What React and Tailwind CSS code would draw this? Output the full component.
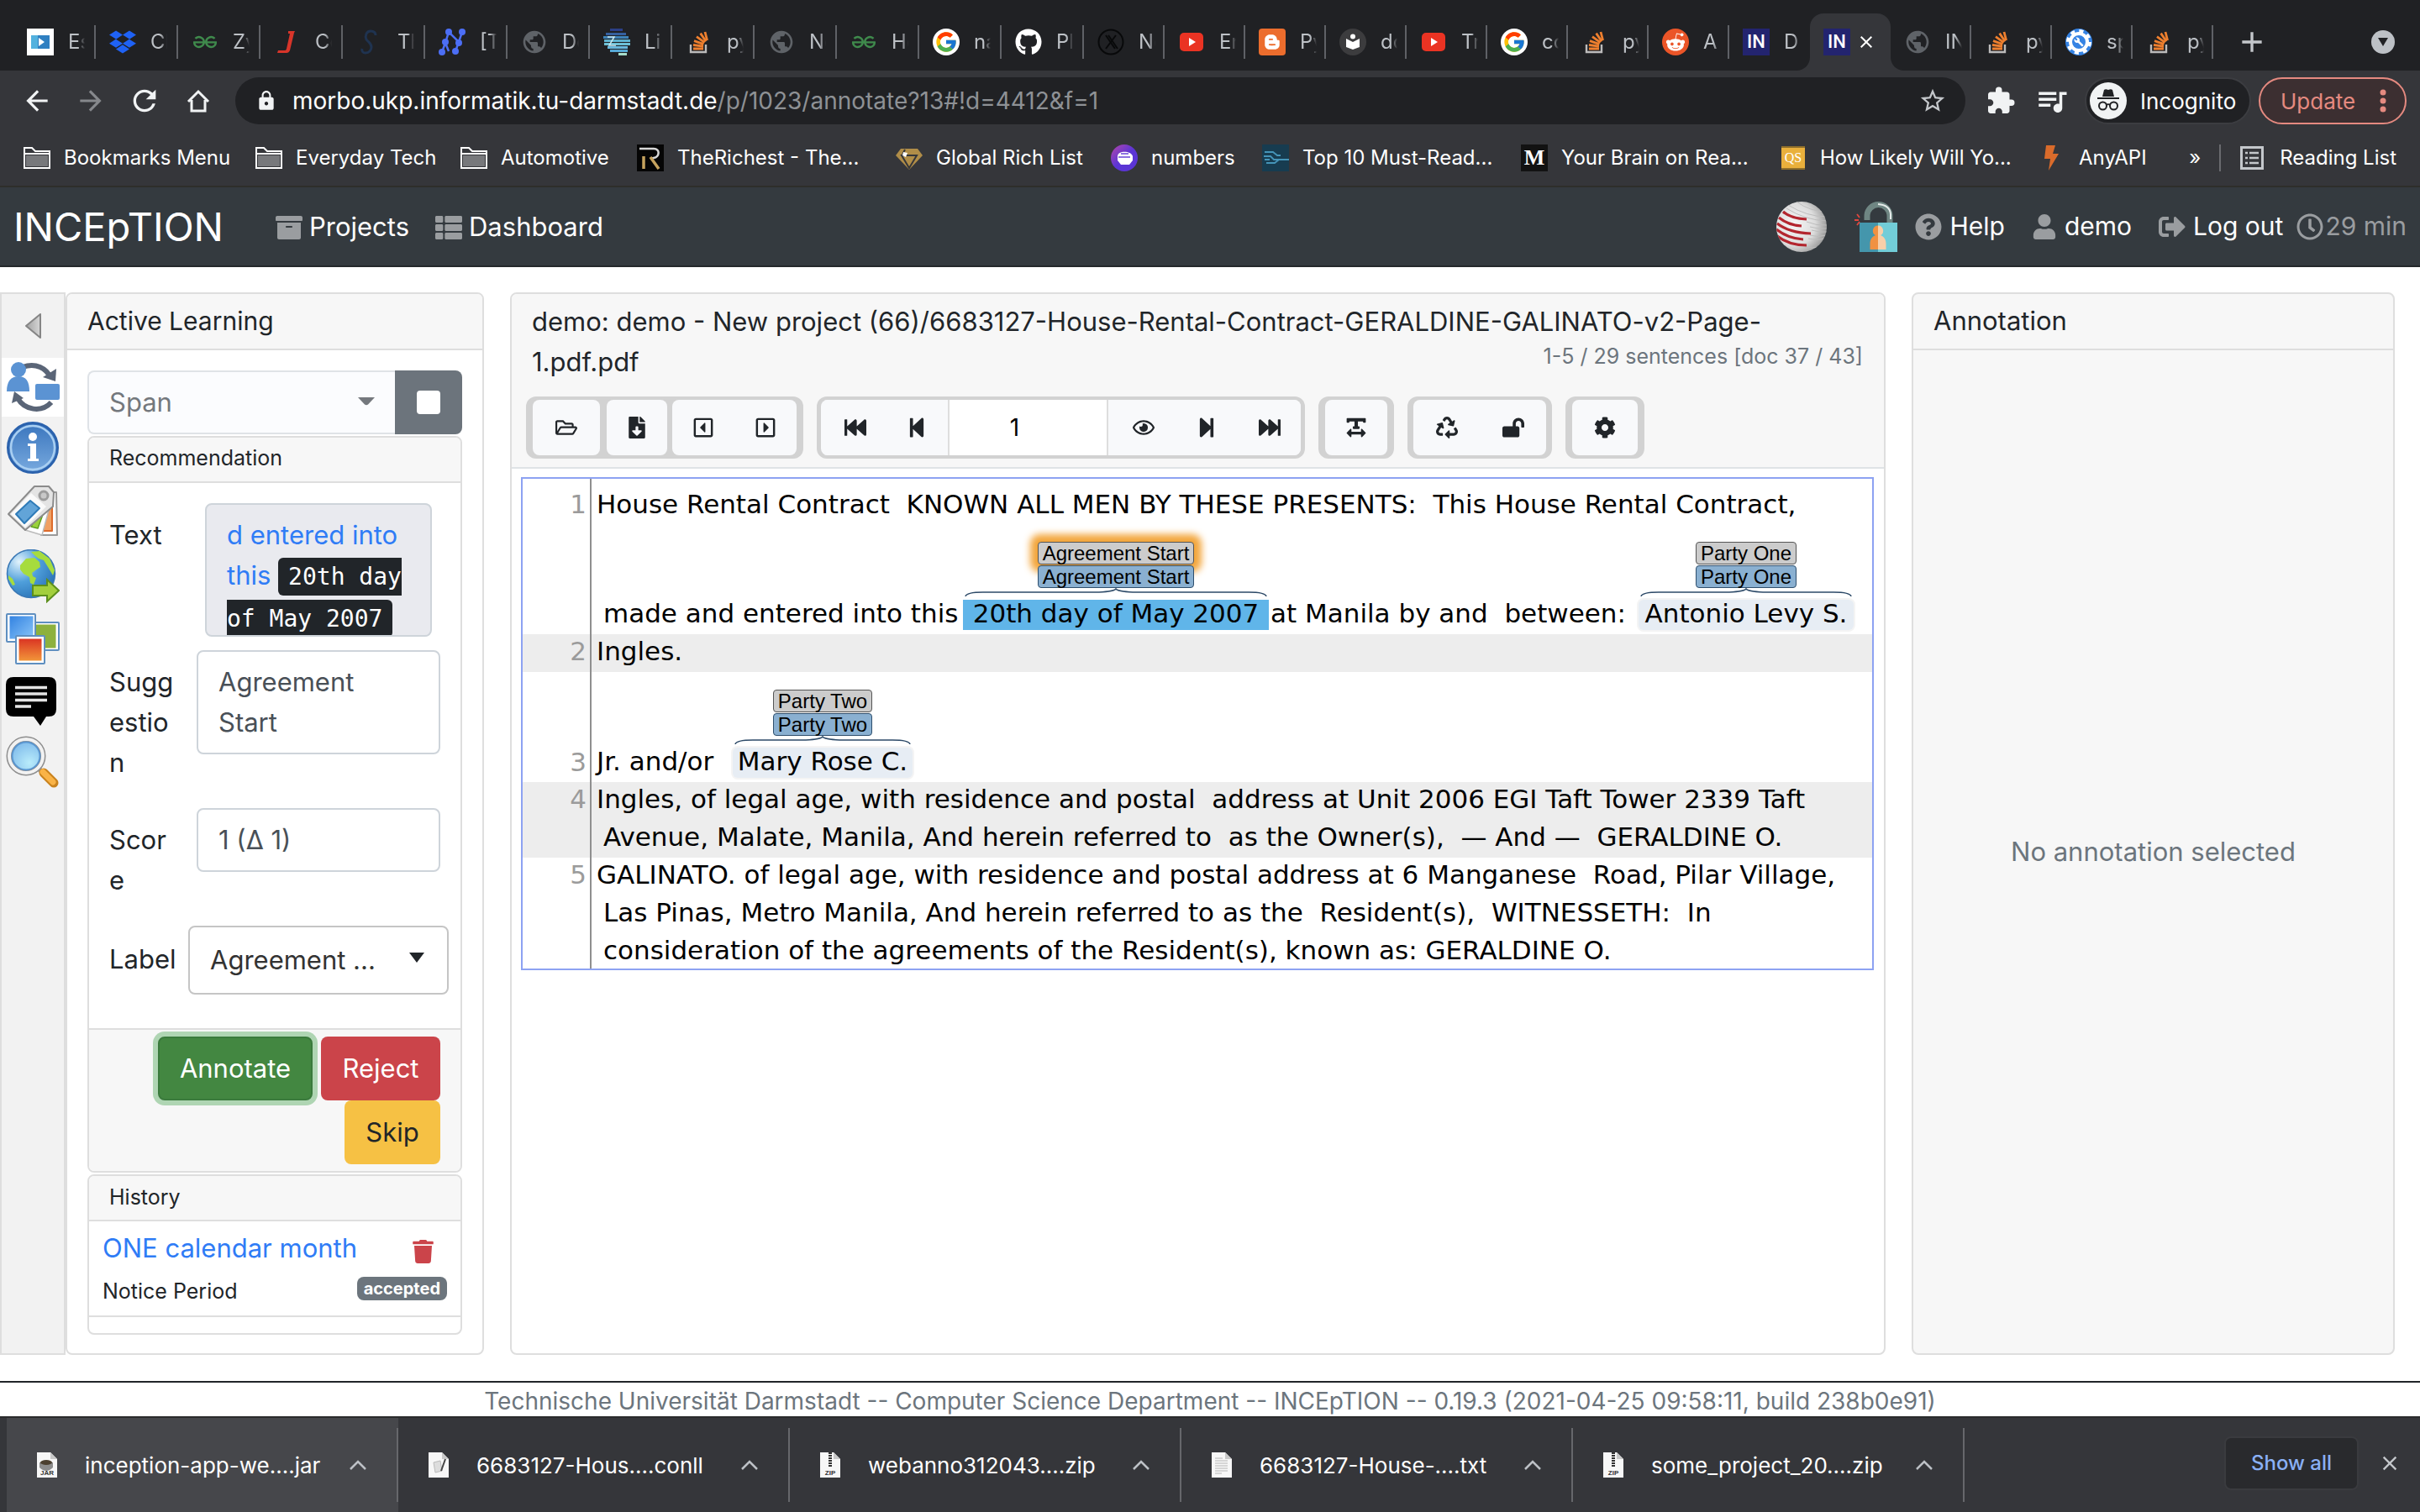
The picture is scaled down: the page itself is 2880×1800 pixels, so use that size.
import React from 'react';
import {
  FaArchive, FaThList, FaQuestionCircle, FaUser, FaSignOutAlt, FaRegClock, FaRegFolderOpen,
  FaFileDownload, FaRegCaretSquareLeft, FaRegCaretSquareRight, FaFastBackward, FaStepBackward,
  FaRegEye, FaStepForward, FaFastForward, FaTextWidth, FaRecycle, FaLockOpen, FaCog, FaTrash,
  FaDropbox, FaGithub, FaRedditAlien, FaBloggerB,
} from 'react-icons/fa';
import { SiGeeksforgeeks } from 'react-icons/si';
import { FcGoogle } from 'react-icons/fc';
import {
  MdArrowBack, MdArrowForward, MdRefresh, MdLock, MdStarBorder, MdExtension, MdQueueMusic,
  MdPublic, MdAdd, MdClose, MdBuild,
} from 'react-icons/md';

/* ---------- favicons ---------- */

const StackIcon = () => (
  <svg viewBox="0 0 32 32" className="size-8">
    <path d="M6 19v9h18v-9" fill="none" stroke="#bcbbbb" strokeWidth="2.4" />
    <g stroke="#ee7f2e" strokeWidth="2.8">
      <path d="M9 24h12M9 19.5l12 1.6M10 14.6l11.4 4M13 9.6l9.6 7M17.6 5.6l6.6 9.6M23 4l2.6 10" />
    </g>
  </svg>
);
const YoutubeIcon = () => (
  <svg viewBox="0 0 32 32" className="size-8">
    <rect x="2" y="5" width="28" height="22" rx="5" fill="#ea3323" />
    <path d="M13 11v10l8-5z" fill="#fff" />
  </svg>
);
const PlayerIcon = () => (
  <svg viewBox="0 0 32 32" className="size-8">
    <rect width="32" height="32" fill="#fff" />
    <rect x="5" y="8" width="22" height="16" fill="#2f7fc1" />
    <rect x="5" y="8" width="8" height="16" fill="#53b1de" />
    <path d="M14 11v10l7-5z" fill="#fff" />
  </svg>
);
const NodesIcon = () => (
  <svg viewBox="0 0 32 32" className="size-8">
    <path d="M4 28L8 17L12 4L24 16L28 4M8 17L12 27M24 16L20 27" fill="none" stroke="#4c6ef5" strokeWidth="2.5" />
    <g fill="#4c6ef5">
      <circle cx="4" cy="28" r="4" /><circle cx="8" cy="16" r="4" /><circle cx="12" cy="4" r="4" />
      <circle cx="24" cy="17" r="4" /><circle cx="28" cy="4" r="4" /><circle cx="20" cy="27" r="4" />
    </g>
  </svg>
);
const StripesIcon = () => (
  <svg viewBox="0 0 32 32" className="size-8">
    <path d="M8 0h15v3H8z" fill="#2b3f86" />
    <path d="M3 5h24v3H3z" fill="#35609f" />
    <path d="M0 9h30v3H0z" fill="#3e83b8" />
    <path d="M1 13h31v3H1z" fill="#5fb3d0" />
    <path d="M1 17h31v3H1z" fill="#6dc0d6" />
    <path d="M5 21h24v3H5z" fill="#69b8dd" />
    <path d="M8 25h21v3H8z" fill="#57a9d6" />
    <path d="M18 29h10v3H18z" fill="#a5dccb" />
    <path d="M5 10h8L7 20h8" fill="none" stroke="#c9e8f0" strokeWidth="1.500" />
  </svg>
);
const JIcon = () => (
  <svg viewBox="0 0 32 32" className="size-8">
    <path d="M17 3h8l-1 2-5 21c-1 2-2 3-4 3H4l1-3h8c1 0 1.500-.5 2-2l4-18h-2z" fill="#d8352a" />
  </svg>
);
const SIcon = () => (
  <svg viewBox="0 0 32 32" className="size-8">
    <path d="M23 8c0-4-3-5-6-5-5 0-7 6-5 10 2 3 6 4 6 9 0 4-3 7-7 7-3 0-5-2-4-5" fill="none" stroke="#1f3350" strokeWidth="3" />
  </svg>
);
const CrossCircle = () => (
  <svg viewBox="0 0 32 32" className="size-8" fill="none" stroke="#08090a">
    <circle cx="16" cy="16" r="14.500" strokeWidth="2" />
    <path d="M10 8l11 16M13 8l11 16M22 8L10 24" strokeWidth="2" />
  </svg>
);
const ReaderIcon = () => (
  <svg viewBox="0 0 32 32" className="size-8">
    <circle cx="16" cy="16" r="16" fill="#3c3c3e" />
    <circle cx="16" cy="9.500" r="3" fill="#fff" />
    <path d="M8 12l8 4 8-4v10l-8 3-8-3z" fill="#fff" />
  </svg>
);
const GearIcon = () => (
  <span className="relative grid size-8 place-items-center overflow-hidden rounded-full bg-[#3583e4]">
    <svg viewBox="0 0 32 32" className="col-start-1 row-start-1 size-8">
      <circle cx="16" cy="16" r="10" fill="none" stroke="#fff" strokeWidth="4" />
      <circle cx="16" cy="16" r="13" fill="none" stroke="#fff" strokeWidth="4" strokeDasharray="5 5.200" />
    </svg>
    <MdBuild className="col-start-1 row-start-1 size-3 text-white" />
  </span>
);
const GithubIcon = () => <FaGithub className="size-8 text-white" />;
const GoogleIcon = () => (
  <span className="grid size-8 place-items-center rounded-full bg-white"><FcGoogle className="size-7" /></span>
);
const BloggerIcon = () => (
  <span className="grid size-8 place-items-center rounded-sm bg-[#ec6d2d]"><FaBloggerB className="size-5 text-white" /></span>
);
const RedditIcon = () => (
  <span className="grid size-8 place-items-center rounded-full bg-[#eb5528]"><FaRedditAlien className="size-6 text-white" /></span>
);
const GfgIcon = () => <SiGeeksforgeeks className="size-7 text-[#3f8a4c]" />;
const GlobeIcon = () => <MdPublic className="size-8 text-[#5f6368]" />;
const DropIcon = () => <FaDropbox className="size-8 text-[#1f62f5]" />;
const InIcon = () => (
  <span className="grid size-8 place-items-center bg-[#23246f] font-[Roboto,sans-serif] text-[22px] leading-none font-medium text-white">IN</span>
);

const wideTabs = [
  [PlayerIcon, 'Es'], [DropIcon, 'Cl'], [GfgIcon, 'Zy'], [JIcon, 'Co'], [SIcon, 'Th'], [NodesIcon, '[Tl'],
  [GlobeIcon, 'De'], [StripesIcon, 'Lin'], [StackIcon, 'py'], [GlobeIcon, 'Ne'], [GfgIcon, 'Ho'],
  [GoogleIcon, 'na'], [GithubIcon, 'Pl'],
];
const midTabs = [
  [CrossCircle, 'Ne'], [YoutubeIcon, 'En'], [BloggerIcon, 'Py'], [ReaderIcon, 'do'], [YoutubeIcon, 'Tr'],
  [GoogleIcon, 'co'], [StackIcon, 'py'], [RedditIcon, 'A'], [InIcon, 'D'],
];
const lastTabs = [[GlobeIcon, 'IN'], [StackIcon, 'py'], [GearIcon, 'sp'], [StackIcon, 'py']];

const Tab = ({ icon: Icon, label, width, sep = true }) => (
  <button type="button" className={`flex h-[68px] ${width} shrink-0 items-center justify-between pl-4 text-[#bdc1c6]`}>
    <span className="flex items-center gap-[17px]">
      <span className="grid size-8 place-items-center"><Icon /></span>
      <span className="w-5 overflow-hidden text-left text-[24px] whitespace-nowrap [mask-image:linear-gradient(to_right,black_60%,transparent)]">{label}</span>
    </span>
    <span className={sep ? 'h-10 w-0.5 bg-[#5f6166]' : 'h-10 w-0.5'} />
  </button>
);

const TabStrip = () => (
  <div className="flex h-[84px] items-end bg-[#202124] pl-4">
    {wideTabs.map(([icon, label], i) => <Tab key={i} icon={icon} label={label} width="w-[98px]" />)}
    {midTabs.map(([icon, label], i) => (
      <Tab key={i} icon={icon} label={label} width="w-[96px]" sep={i < midTabs.length - 1} />
    ))}
    <div className="relative flex h-[68px] w-[96px] shrink-0 items-center gap-[7px] rounded-t-2xl bg-[#35363a] pl-4">
      <svg viewBox="0 0 16 16" className="absolute bottom-0 -left-4 size-4"><path d="M16 0v16H0C9 16 16 9 16 0z" fill="#35363a" /></svg>
      <svg viewBox="0 0 16 16" className="absolute -right-4 bottom-0 size-4"><path d="M0 0v16h16C7 16 0 9 0 0z" fill="#35363a" /></svg>
      <InIcon />
      <button type="button" aria-label="Close tab"><MdClose className="size-6 text-white" /></button>
    </div>
    {lastTabs.map(([icon, label], i) => <Tab key={i} icon={icon} label={label} width="w-[96px]" />)}
    <button type="button" aria-label="New tab" className="ml-[26px] flex h-[68px] items-center">
      <MdAdd className="size-10 text-[#c4c7cb]" />
    </button>
    <div className="flex h-[68px] flex-1 items-center justify-end pr-[30px]">
      <button type="button" aria-label="Search tabs" className="grid size-7 place-items-center rounded-full bg-[#bdc1c6]">
        <svg viewBox="0 0 12 10" className="h-2.5 w-3"><path d="M0 0h12L6 10z" fill="#202124" /></svg>
      </button>
    </div>
  </div>
);

const AddressBar = () => (
  <div className="flex h-[72px] items-center bg-[#35363a] pr-4 pl-6 text-[#f1f3f4]">
    <button type="button" aria-label="Back" className="mr-6 grid size-10 place-items-center"><MdArrowBack className="size-[38px]" /></button>
    <button type="button" aria-label="Forward" className="mr-6 grid size-10 place-items-center"><MdArrowForward className="size-[38px] text-[#86888c]" /></button>
    <button type="button" aria-label="Reload" className="mr-6 grid size-10 place-items-center"><MdRefresh className="size-10" /></button>
    <button type="button" aria-label="Home" className="mr-6 grid size-10 place-items-center">
      <svg viewBox="0 0 28 28" className="size-7" fill="none" stroke="#f1f3f4" strokeWidth="3">
        <path d="M2 15L14 3l12 12M6 13v13h16V13" />
      </svg>
    </button>
    <div className="flex h-14 flex-1 items-center rounded-full bg-[#202124] pr-[22px] pl-6">
      <MdLock className="mr-[18px] size-[26px]" />
      <p className="flex-1 text-[28px] text-white">
        morbo.ukp.informatik.tu-darmstadt.de<span className="text-[#8e9195]">/p/1023/annotate?13#!d=4412&amp;f=1</span>
      </p>
      <button type="button" aria-label="Bookmark"><MdStarBorder className="size-[34px] text-[#c4c7cb]" /></button>
    </div>
    <div className="ml-[24px] flex items-center gap-[22px]">
      <MdExtension className="size-9" />
      <MdQueueMusic className="size-[42px]" />
    </div>
    <div className="ml-[18px] flex h-14 w-[198px] items-center gap-4 rounded-full border-2 border-[#3c3d41] bg-[#202124] pl-1">
      <svg viewBox="0 0 44 44" className="size-11">
        <circle cx="22" cy="22" r="22" fill="#f1f3f4" />
        <path d="M15 17l2-8c1-1 3-1 5 0 2-1 4-1 5 0l2 8z" fill="#202124" />
        <path d="M9 19h26" stroke="#202124" strokeWidth="2" />
        <g fill="none" stroke="#202124" strokeWidth="2"><circle cx="15.500" cy="28" r="4.500" /><circle cx="28.500" cy="28" r="4.500" /><path d="M20 27c1-1 3-1 4 0" /></g>
      </svg>
      <span className="text-[26px] text-white">Incognito</span>
    </div>
    <button type="button" className="ml-[9px] flex h-14 w-[176px] items-center justify-between rounded-full border-2 border-[#e58a80] bg-[#3c2f31] pr-[22px] pl-6 text-[26px] text-[#e58a80]">
      Update
      <svg viewBox="0 0 8 28" className="h-7 w-2" fill="#e58a80"><circle cx="4" cy="4" r="3.500" /><circle cx="4" cy="14" r="3.500" /><circle cx="4" cy="24" r="3.500" /></svg>
    </button>
  </div>
);

/* ---------- bookmarks ---------- */

const Folder = () => (
  <svg viewBox="0 0 32 26" className="h-[26px] w-8">
    <path d="M1 25V1h9l4 4h17v20z" fill="#35363a" stroke="#fff" strokeWidth="2" />
    <path d="M3 10h26v13H3z" fill="#77787b" />
    <path d="M1 8h30" stroke="#fff" strokeWidth="2" />
  </svg>
);
const Richest = () => (
  <svg viewBox="0 0 32 32" className="size-8"><rect width="32" height="32" fill="#050505" />
    <path d="M3 5h17c8 0 7 10 0 11l-4 1" fill="none" stroke="#d8d8d8" strokeWidth="2.500" />
    <path d="M8 14v15M16 15l10 14" stroke="#c5a25e" strokeWidth="3.500" />
  </svg>
);
const Diamond = () => (
  <svg viewBox="0 0 32 32" className="size-8"><path d="M6 5h20l6 8-16 17L0 13z" fill="#b08d48" />
    <path d="M7 13h18L16 28zM11 6l-3 6" fill="none" stroke="#35363a" strokeWidth="2" /><path d="M9 9l5 1-2 5-4-2z" fill="#fff" />
  </svg>
);
const Numbers = () => (
  <svg viewBox="0 0 32 32" className="size-8"><defs><linearGradient id="num" x1="0" y1="0" x2="1" y2="1"><stop offset="0" stopColor="#b546a8" /><stop offset=".5" stopColor="#5b35d5" /></linearGradient></defs>
    <circle cx="16" cy="16" r="16" fill="url(#num)" /><path d="M8 14c0-7 16-7 18 0v5l-4 5H12l-4-5z" fill="#fff" /><path d="M9 15h14M12 11h9" stroke="#6a45d8" strokeWidth="1.500" />
  </svg>
);
const Circuit = () => (
  <svg viewBox="0 0 32 32" className="size-8"><rect width="32" height="32" fill="#173c50" />
    <path d="M3 9h10l5 4h4M2 14h8l4 4h18M5 22h10l5-4M9 18H3" fill="none" stroke="#4594b8" strokeWidth="1.800" />
  </svg>
);
const Medium = () => (
  <span className="grid size-8 place-items-center bg-[#121212] font-['Liberation_Serif',serif] text-[26px] leading-none font-bold text-white">M</span>
);
const Qs = () => (
  <span className="grid h-7 w-7 place-items-center border-y-2 border-[#8f6f2b] bg-[#e9b03c] font-['Liberation_Serif',serif] text-[16px] leading-none text-white">QS</span>
);
const Bolt = () => (
  <svg viewBox="0 0 32 32" className="size-8"><path d="M9 1h11l-3 10h7L12 31l2-14H7z" fill="#d96b2b" /></svg>
);

const bookmarks = [
  [Folder, 'Bookmarks Menu', 'w-[276px]'],
  [Folder, 'Everyday Tech', 'w-[244px]'],
  [Folder, 'Automotive', 'w-[210px]'],
  [Richest, 'TheRichest - The...', 'w-[308px]'],
  [Diamond, 'Global Rich List', 'w-[256px]'],
  [Numbers, 'numbers', 'w-[180px]'],
  [Circuit, 'Top 10 Must-Read...', 'w-[308px]'],
  [Medium, 'Your Brain on Rea...', 'w-[308px]'],
  [Qs, 'How Likely Will Yo...', 'w-[308px]'],
  [Bolt, 'AnyAPI', 'w-[126px]'],
];

const Bookmarks = () => (
  <div className="flex h-[65px] items-center bg-[#35363a] pr-7 pb-0.5 pl-7 text-[24px] text-white">
    {bookmarks.map(([Icon, label, w]) => (
      <a key={label} href="#bookmark" className={`flex ${w} shrink-0 items-center gap-4 whitespace-nowrap`}>
        <span className="grid size-8 shrink-0 place-items-center"><Icon /></span>{label}
      </a>
    ))}
    <div className="flex flex-1 items-center justify-end">
      <button type="button" aria-label="More bookmarks" className="mr-[22px]">»</button>
      <span className="mr-[23px] h-8 w-0.5 bg-[#6a6b6f]" />
      <svg viewBox="0 0 28 28" className="mr-[19px] size-7">
        <rect x="1.500" y="1.500" width="25" height="25" fill="none" stroke="#c4c7cb" strokeWidth="3" />
        <path d="M6 8h3M6 14h3M6 20h3M11 8h11M11 14h11M11 20h11" stroke="#c4c7cb" strokeWidth="2.500" />
      </svg>
      <a href="#reading">Reading List</a>
    </div>
  </div>
);

/* ---------- application header ---------- */

const Ball = () => (
  <svg viewBox="0 0 60 60" className="size-[60px]">
    <defs>
      <radialGradient id="ball" cx=".35" cy=".45" r=".7"><stop offset="0" stopColor="#f6f6f6" /><stop offset=".6" stopColor="#dcdcdc" /><stop offset="1" stopColor="#8f8f8f" /></radialGradient>
      <clipPath id="ballclip"><circle cx="30" cy="30" r="30" /></clipPath>
    </defs>
    <circle cx="30" cy="30" r="30" fill="url(#ball)" />
    <g clipPath="url(#ballclip)" fill="none">
      <path d="M14 4q22 14 46 14M24 0q16 12 36 12M36 24q12 5 24 4M42 34q10 3 18 2M38 44q10 3 20 0M34 54q10 2 16 0M12 8q22 14 48 15M40 30q10 3 20 2M40 40q10 3 19 0" stroke="#bdbdbd" strokeWidth="1" />
      <g stroke="#b3262f" strokeWidth="3.200">
        <path d="M8 12q9 8 28 9M3 19q11 9 27 10M1 26q14 11 40 12M0 33q14 11 32 12M1 41q14 11 35 11" />
      </g>
    </g>
  </svg>
);
const Padlock = () => (
  <svg viewBox="0 0 52 60" className="h-[60px] w-[52px]">
    <path d="M15 22V17a13.500 13.500 0 0 1 27 0v9" fill="none" stroke="#6f8683" strokeWidth="7" />
    <path d="M28 3q14 1 15 12v6" fill="none" stroke="#e5ebea" strokeWidth="2" />
    <path d="M6 25h22v35H6z" fill="#4496ac" /><path d="M28 25h23v35H28z" fill="#72cdd8" />
    <path d="M28 28.500a6.200 6.200 0 0 0-3 11.600c-4 1.500-6.500 5-6.500 10V57H28z" fill="#f09142" />
    <path d="M28 28.500a6.200 6.200 0 0 1 3 11.600c4 1.500 6.500 5 6.500 10V57H28z" fill="#f8cfa9" />
    <path d="M6 19L3 15M5 22H0M6 24l-3 4" stroke="#e2473e" strokeWidth="1.800" />
  </svg>
);

const NavBar = () => (
  <header className="flex h-[97px] items-center border-t-2 border-b-2 border-t-[#2e2e2a] border-b-[#24282b] bg-[#343a3f] px-4 text-[30px] text-white">
    <a href="#home" className="w-[312px] text-[47px] leading-none">INCEpTION</a>
    <nav className="flex flex-1 items-center pt-0.5 text-[31px]">
      <a href="#projects" className="flex w-[190px] items-center gap-2"><FaArchive className="size-8 text-[#9a9da0]" />Projects</a>
      <a href="#dashboard" className="flex items-center gap-2"><FaThList className="size-8 text-[#9a9da0]" />Dashboard</a>
    </nav>
    <div className="flex items-center">
      <Ball />
      <span className="ml-[33px] w-[72px]"><Padlock /></span>
      <a href="#help" className="mr-8 flex items-center gap-[9px]"><FaQuestionCircle className="size-8 text-[#9a9da0]" />Help</a>
      <a href="#user" className="mr-8 flex items-center gap-[9px]"><FaUser className="size-[30px] text-[#9a9da0]" />demo</a>
      <a href="#logout" className="mr-4 flex items-center gap-[9px]"><FaSignOutAlt className="size-8 text-[#9a9da0]" />Log out</a>
      <span className="flex items-center gap-0.5 text-[#9a9da0]"><FaRegClock className="size-8" />29 min</span>
    </div>
  </header>
);

/* ---------- side rail ---------- */

const CollapseIcon = () => (
  <svg viewBox="0 0 24 34" className="h-[34px] w-6"><defs><linearGradient id="tri" x1="0" x2="1"><stop offset="0" stopColor="#a3a3a3" /><stop offset="1" stopColor="#d6d6d6" /></linearGradient></defs>
    <path d="M21 3v28L4 17z" fill="url(#tri)" stroke="#858585" strokeWidth="2" strokeLinejoin="round" />
  </svg>
);
const SyncIcon = () => (
  <svg viewBox="0 0 64 64" className="size-16">
    <path d="M20 8c16-6 28 2 33 12" fill="none" stroke="#5a6577" strokeWidth="6" />
    <path d="M44 20l15 5 1-15z" fill="#5a6577" />
    <path d="M54 50c-12 13-32 9-40-5" fill="none" stroke="#5a6577" strokeWidth="6" />
    <path d="M7 51l3-14 11 8z" fill="#5a6577" />
    <circle cx="15" cy="11" r="9" fill="#5b93d3" />
    <path d="M1 37c0-12 5-18 14-18s13 6 13 18z" fill="#5b93d3" />
    <rect x="35" y="28" width="29" height="19" rx="2" fill="#5b93d3" />
  </svg>
);
const InfoIcon = () => (
  <svg viewBox="0 0 64 64" className="size-16"><defs><linearGradient id="inf" x1="0" y1="0" x2="0" y2="1"><stop offset="0" stopColor="#3a75bd" /><stop offset="1" stopColor="#78aadf" /></linearGradient></defs>
    <circle cx="32" cy="31" r="29.500" fill="url(#inf)" stroke="#2b62ad" strokeWidth="3" />
    <circle cx="32" cy="31" r="26" fill="none" stroke="#a9cff2" strokeWidth="2.500" />
    <circle cx="32" cy="18" r="5" fill="#fff" />
    <path d="M26 26h10v18h3v3H26v-3h3V29h-3z" fill="#fff" />
  </svg>
);
const TagsIcon = () => (
  <svg viewBox="0 0 64 64" className="size-16" strokeLinejoin="round">
    <path d="M50 8h10l1 51H42z" fill="#fdfdfd" stroke="#999" strokeWidth="2" />
    <path d="M48 28l7-5v31H44z" fill="#f0a063" stroke="#dd6b2c" strokeWidth="2" />
    <path d="M55 14L43 59l-20-6 18-34z" fill="#fff" stroke="#bbb" strokeWidth="1.500" />
    <path d="M46 29l-8 22-8-2 8-14z" fill="#9bd13c" stroke="#5fa01e" strokeWidth="1.500" />
    <path d="M3 34L34 1h17l6 7-1 17-33 28z" fill="#e4e4e4" stroke="#8b8b8b" strokeWidth="2" />
    <path d="M6 34L30 9l18 16-25 25z" fill="#fafafa" />
    <path d="M12 34l17-16 11 9-18 18z" fill="#62a4d8" stroke="#2f7bb8" strokeWidth="2" />
    <circle cx="45" cy="12" r="5" fill="#c8c8c8" stroke="#9c9c9c" strokeWidth="3" />
  </svg>
);
const WorldIcon = () => (
  <svg viewBox="0 0 64 64" className="size-16"><defs><radialGradient id="wld" cx=".25" cy=".25" r=".85"><stop offset="0" stopColor="#e2f3fc" /><stop offset=".5" stopColor="#4f9fdb" /><stop offset="1" stopColor="#2a72b5" /></radialGradient></defs>
    <circle cx="30" cy="29" r="28.500" fill="url(#wld)" stroke="#3a78b5" strokeWidth="1.500" />
    <path d="M17 19l7-8 10-1 6 5 1 6-6 4-4 3 1 4 4 2-3 8-4-2-1-7-7-4-4-5z" fill="#a6dc3e" />
    <path d="M30 3l10-1 12 9 6 14-2 6-6-10-5-8-6-2-5-4zM3 31l5 4 3 7-3 1-5-8z" fill="#a6dc3e" />
    <path d="M32 43h17v-7l14 13-14 13v-7H32z" fill="#a3cf3c" stroke="#5c8f1c" strokeWidth="2" />
  </svg>
);
const PhotosIcon = () => (
  <svg viewBox="0 0 64 64" className="size-16"><defs>
    <linearGradient id="p1" x1="0" y1="0" x2="1" y2="1"><stop offset="0" stopColor="#2e7fe0" /><stop offset="1" stopColor="#8ec8fa" /></linearGradient>
    <linearGradient id="p2" x1="0" y1="0" x2="0" y2="1"><stop offset="0" stopColor="#d92f22" /><stop offset="1" stopColor="#f39a3a" /></linearGradient></defs>
    <rect x="30" y="12" width="31" height="31" fill="#8db13d" stroke="#fff" strokeWidth="3" />
    <rect x="29" y="11" width="34" height="33" rx="1" fill="none" stroke="#5f8fc0" strokeWidth="2" />
    <rect x="3" y="2" width="31" height="30" fill="url(#p1)" stroke="#fff" strokeWidth="3" />
    <rect x="1" y="1" width="34" height="33" rx="1" fill="none" stroke="#5f8fc0" strokeWidth="2" />
    <rect x="14" y="29" width="30" height="29" fill="url(#p2)" stroke="#fff" strokeWidth="3" />
    <rect x="12" y="27" width="34" height="33" rx="1" fill="none" stroke="#5f8fc0" strokeWidth="2" />
  </svg>
);
const CommentIcon = () => (
  <svg viewBox="0 0 64 64" className="size-16">
    <path d="M9 2h42q9 0 9 9v29q0 9-9 9h-3l-7 11-8-11H9q-9 0-9-9V11q0-9 9-9z" fill="#000" />
    <path d="M11 14.500h38M11 22h38M11 29.500h38M11 37h19" stroke="#e4e4e4" strokeWidth="3.500" />
  </svg>
);
const SearchIcon = () => (
  <svg viewBox="0 0 64 64" className="size-16"><defs><radialGradient id="sea" cx=".6" cy=".7" r=".7"><stop offset="0" stopColor="#b9ecfb" /><stop offset="1" stopColor="#7cb8ea" /></radialGradient></defs>
    <path d="M38 38l6 6" stroke="#999" strokeWidth="6" />
    <path d="M45 44l12 12" stroke="#c9821d" strokeWidth="11" strokeLinecap="round" />
    <path d="M44 43l12 12" stroke="#f9b347" strokeWidth="7" strokeLinecap="round" />
    <circle cx="24" cy="24" r="20" fill="url(#sea)" stroke="#8e8e8e" strokeWidth="7" />
    <circle cx="24" cy="24" r="20" fill="none" stroke="#f2f2f2" strokeWidth="4" />
    <circle cx="24" cy="24" r="16.500" fill="none" stroke="#5a96d0" strokeWidth="2" />
  </svg>
);

const rail = [
  ['Information', InfoIcon, 'h-[76px]'], ['Layers', TagsIcon, 'h-[76px]'], ['Export', WorldIcon, 'h-[76px]'],
  ['Images', PhotosIcon, 'h-[76px]'], ['Comments', CommentIcon, 'h-[72px]'], ['Search', SearchIcon, 'h-[72px]'],
];
const Rail = () => (
  <aside className="flex w-[78px] shrink-0 flex-col border-2 border-[#dedede] bg-[#f2f2f2]">
    <button type="button" aria-label="Collapse" className="grid h-[76px] place-items-center"><CollapseIcon /></button>
    <button type="button" aria-label="Active learning" className="grid h-[70px] place-items-center bg-white"><SyncIcon /></button>
    {rail.map(([name, Icon, h]) => (
      <button key={name} type="button" aria-label={name} className={`grid ${h} place-items-center`}><Icon /></button>
    ))}
  </aside>
);

/* ---------- active learning panel ---------- */

const fieldLabel = 'w-20 shrink-0 break-all leading-[48px]';

const ActiveLearning = () => (
  <section className="flex w-[498px] shrink-0 flex-col rounded-lg border-2 border-[#dedede] text-[31px] text-[#212529]">
    <h2 className="flex h-[67px] items-center rounded-t-md border-b-2 border-[#dedede] bg-[#f7f7f7] px-6 text-[30px]">Active Learning</h2>
    <div className="px-6 pt-6">
      <div className="flex h-[76px]">
        <div className="relative flex-1">
          <select aria-label="Layer" className="h-full w-full appearance-none rounded-l-lg border-2 border-r-0 border-[#dfe3e7] bg-[#fbfcfe] pl-6 text-[#74787d]">
            <option>Span</option>
          </select>
          <svg viewBox="0 0 20 10" className="pointer-events-none absolute top-8 right-6 h-2.5 w-5"><path d="M0 0h20l-8 8.500q-2 1.500-4 0z" fill="#74787d" /></svg>
        </div>
        <button type="button" aria-label="Stop" className="grid w-20 place-items-center rounded-r-lg bg-[#6c747c]">
          <span className="size-7 rounded-sm bg-white" />
        </button>
      </div>

      <div className="mt-0.5 rounded-lg border-2 border-[#dedede]">
        <h3 className="flex h-[54px] items-center rounded-t-md border-b-2 border-[#dedede] bg-[#f7f7f7] px-6 pb-0.5 text-[25px]">Recommendation</h3>
        <div className="pt-6 pr-3.5 pl-6">
          <div className="mb-4 flex gap-3.5">
            <span className={`${fieldLabel} pt-3.5`}>Text</span>
            <div className="mx-5 h-[159px] flex-1 overflow-hidden rounded-lg border-2 border-[#ced4da] bg-[#e9eaef] px-6 pt-3 leading-[48px]">
              <a href="#text" className="text-[#2f7cf6]">d entered into this </a>
              <kbd className="rounded-md bg-[#212529] px-3 py-1.5 font-['DejaVu_Sans_Mono',monospace] text-[28px] text-white">20th day of May 2007</kbd>
            </div>
          </div>
          <div className="mb-[30px] flex items-start gap-3.5">
            <span className={`${fieldLabel} pt-3.5`}>Suggestion</span>
            <div className="mx-2.5 flex-1 rounded-lg border-2 border-[#ced4da] py-3 pr-10 pl-6 leading-[48px] text-[#495057]">Agreement Start</div>
          </div>
          <div className="mb-[30px] flex items-start gap-3.5">
            <span className={`${fieldLabel} pt-3.5`}>Score</span>
            <div className="mx-2.5 flex-1 rounded-lg border-2 border-[#ced4da] px-6 py-3 leading-[48px] text-[#495057]">1 (Δ 1)</div>
          </div>
          <div className="mb-10 flex items-center gap-3.5">
            <label htmlFor="label" className={`${fieldLabel} pb-0.5`}>Label</label>
            <div className="relative flex-1">
              <select id="label" className="h-[82px] w-full appearance-none rounded-lg border-2 border-[#c5c5c5] bg-white pl-6 text-[#333]">
                <option>Agreement ...</option>
              </select>
              <svg viewBox="0 0 18 12" className="pointer-events-none absolute top-8 right-[29px] h-3 w-[18px]"><path d="M0 0h18L9 12z" fill="#212529" /></svg>
            </div>
          </div>
        </div>
        <div className="flex flex-wrap justify-end gap-x-2.5 rounded-b-md border-t-2 border-[#dedede] bg-[#f7f7f7] px-6 pt-2 pb-2">
          <button type="button" className="h-[76px] w-[184px] rounded-lg border-2 border-[#3a7a3c] bg-[#438741] text-white ring-6 ring-[#afd5b3]">Annotate</button>
          <button type="button" className="h-[76px] w-[142px] rounded-lg bg-[#cb444a] text-white">Reject</button>
          <button type="button" className="h-[76px] w-[114px] rounded-lg bg-[#f6c144] text-[#212529]">Skip</button>
        </div>
      </div>

      <div className="mt-0.5 h-[191px] rounded-lg border-2 border-[#dedede]">
        <h3 className="flex h-[54px] items-center rounded-t-md border-b-2 border-[#dedede] bg-[#f7f7f7] px-6 text-[25px]">History</h3>
        <div className="border-b-2 border-[#dedede] pt-2 pr-4 pl-4">
          <div className="flex h-12 items-center justify-between">
            <a href="#history" className="text-[#2f7cf6]">ONE calendar month</a>
            <button type="button" aria-label="Delete" className="mt-2 mr-4"><FaTrash className="h-7 w-[25px] text-[#cb444a]" /></button>
          </div>
          <div className="flex h-14 items-center justify-between">
            <span className="text-[25px]">Notice Period</span>
            <span className="mb-2 rounded-lg bg-[#6c757d] px-2 text-[20px] leading-7 font-bold text-white">accepted</span>
          </div>
        </div>
      </div>
    </div>
  </section>
);

/* ---------- document panel ---------- */

const ToolButton = ({ label, icon: Icon, className = 'flex-1' }) => (
  <button type="button" aria-label={label} className={`grid h-[66px] place-items-center bg-[#f8f9fb] text-[#212529] ${className}`}>
    <Icon className="h-[26px] w-auto" />
  </button>
);

const group = 'flex items-center rounded-xl bg-[#d2d2d2] h-[74px]';

const Toolbar = () => (
  <div className="mt-[17px] flex h-[74px] gap-4 pr-4">
    <div className={`${group} w-[330px] px-2`}>
      <ToolButton label="Open" icon={FaRegFolderOpen} className="mr-2 w-20 rounded-lg" />
      <ToolButton label="Export" icon={FaFileDownload} className="mr-1.5 w-[72px] rounded-lg" />
      <div className="flex flex-1 overflow-hidden rounded-lg">
        <ToolButton label="Previous document" icon={FaRegCaretSquareLeft} />
        <ToolButton label="Next document" icon={FaRegCaretSquareRight} />
      </div>
    </div>
    <div className={`${group} w-[581px] px-[5px]`}>
      <div className="flex w-[151px] overflow-hidden rounded-l-lg bg-[#f8f9fb] pl-1">
        <ToolButton label="First page" icon={FaFastBackward} />
        <ToolButton label="Previous page" icon={FaStepBackward} />
      </div>
      <input aria-label="Page" defaultValue="1" className="h-[66px] w-[191px] border-x-2 border-[#dedede] bg-white pr-8 text-center text-[28px] text-black" />
      <div className="flex flex-1 overflow-hidden rounded-r-lg bg-[#f8f9fb] pl-1">
        <ToolButton label="Show" icon={FaRegEye} />
        <ToolButton label="Next page" icon={FaStepForward} />
        <ToolButton label="Last page" icon={FaFastForward} />
      </div>
    </div>
    <div className={`${group} w-[90px] px-2`}><ToolButton label="Text direction" icon={FaTextWidth} className="flex-1 rounded-lg" /></div>
    <div className={`${group} w-[172px] px-[7px]`}>
      <ToolButton label="Reset" icon={FaRecycle} className="flex-1 rounded-l-lg" />
      <ToolButton label="Finish" icon={FaLockOpen} className="flex-1 rounded-r-lg" />
    </div>
    <div className={`${group} w-[94px] px-2`}><ToolButton label="Settings" icon={FaCog} className="flex-1 rounded-lg" /></div>
  </div>
);

const Line = ({ children, first, indent }) => (
  <div className={`flex min-h-[45px] items-end whitespace-pre ${indent ? 'pl-3.5' : 'pl-1.5'} ${first ? 'mt-2.5' : ''}`}>{children}</div>
);
const Words = ({ children, className = '' }) => <span className={`h-[45px] shrink-0 ${className}`}>{children}</span>;

const chip = "flex h-[27px] items-center rounded-sm border px-[5px] font-['Liberation_Sans',sans-serif] text-[24px] leading-none";

const Mark = ({ label, width, children, selected, className = '' }) => (
  <span className={`flex shrink-0 flex-col items-center ${className}`}>
    <span className={`${chip} border-[#555] bg-[#cccccc] ${selected ? 'shadow-[0_0_8px_9px_#f3a63c]' : ''}`}>{label}</span>
    <span className={`${chip} relative mt-px border-[#2f4f6d] bg-[#8ab0d1]`}>{label}</span>
    <svg viewBox={`0 0 ${width} 10`} className="h-2.5 w-full" preserveAspectRatio="none">
      <path d={`M3 10Q4 5 24 5L${width / 2 - 20} 5Q${width / 2 - 2} 4 ${width / 2} 1Q${width / 2 + 2} 4 ${width / 2 + 20} 5L${width - 24} 5Q${width - 4} 5 ${width - 3} 10`} fill="none" stroke="#2d4a68" strokeWidth="1.500" />
    </svg>
    <span className={`mt-1 mb-[5px] h-9 w-full text-center leading-[33px] ${selected ? 'bg-[#60b5e9]' : 'rounded-md bg-[#e7edf4] shadow-[0_0_0_2px_#f4f4f4]'}`}>{children}</span>
  </span>
);

const Row = ({ n, shaded, children }) => (
  <div className={`flex ${shaded ? 'bg-[#ededed]' : ''}`}>
    <div className="flex w-[82px] shrink-0 flex-col border-r-2 border-[#8f8f8f] pr-1 text-right text-[#9b9b9b]">{n}</div>
    <div className="min-w-0 flex-1">{children}</div>
  </div>
);

const Document = () => (
  <section className="flex min-w-0 flex-1 flex-col rounded-lg border-2 border-[#dedede] text-[31px] text-[#212529]">
    <div className="rounded-t-md border-b-2 border-[#dfe3e6] bg-[#f7f7f7] pt-[9px] pb-2.5">
      <div className="grid pr-[25px] pl-6">
        <h2 className="col-start-1 row-start-1 pr-20 leading-[48px]">demo: demo - New project (66)/6683127-House-Rental-Contract-GERALDINE-GALINATO-v2-Page-<wbr />1.pdf.pdf</h2>
        <p className="col-start-1 row-start-1 self-end justify-self-end pb-[7px] text-[25px] leading-[48px] text-[#6c757d]">1-5 / 29 sentences [doc 37 / 43]</p>
      </div>
      <div className="pl-[17px]"><Toolbar /></div>
    </div>
    <div className="mt-2.5 mr-3 ml-[11px] border-2 border-[#8da2f2] font-['DejaVu_Sans',sans-serif] text-[31px] leading-[41px] text-black">
      <Row n={<span className="mt-2.5">1</span>}>
        <Line first><Words>House Rental Contract  KNOWN ALL MEN BY THESE PRESENTS:  This House Rental Contract,</Words></Line>
        <Line indent>
          <Words className="w-[428px]">made and entered into this</Words>
          <Mark label="Agreement Start" width={364} selected className="w-[364px] pt-5">20th day of May 2007</Mark>
          <Words className="w-[440px] pl-0.5">at Manila by and  between:</Words>
          <Mark label="Party One" width={256} className="w-[256px]">Antonio Levy S.</Mark>
        </Line>
      </Row>
      <Row n="2" shaded><Line><Words>Ingles.</Words></Line></Row>
      <Row n={<span className="mt-[87px]">3</span>}>
        <Line>
          <Words className="w-[162px]">Jr. and/or</Words>
          <Mark label="Party Two" width={214} className="w-[214px] pt-[21px]">Mary Rose C.</Mark>
        </Line>
      </Row>
      <Row n="4" shaded>
        <Line><Words>Ingles, of legal age, with residence and postal  address at Unit 2006 EGI Taft Tower 2339 Taft</Words></Line>
        <Line indent><Words>Avenue, Malate, Manila, And herein referred to  as the Owner(s),  — And —  GERALDINE O.</Words></Line>
      </Row>
      <Row n="5">
        <Line><Words>GALINATO. of legal age, with residence and postal address at 6 Manganese  Road, Pilar Village,</Words></Line>
        <Line indent><Words>Las Pinas, Metro Manila, And herein referred to as the  Resident(s),  WITNESSETH:  In</Words></Line>
        <div className="h-[42px] pl-3.5 whitespace-pre">consideration of the agreements of the Resident(s), known as: GERALDINE O.</div>
      </Row>
    </div>
  </section>
);

const Annotation = () => (
  <section className="flex w-[575px] shrink-0 flex-col rounded-lg border-2 border-[#dedede] bg-[#f7f7f7] text-[31px] text-[#212529]">
    <h2 className="flex h-[67px] items-center border-b-2 border-[#dedede] px-6">Annotation</h2>
    <p className="grid flex-1 place-items-center text-[#6c757d]">No annotation selected</p>
  </section>
);

/* ---------- download shelf ---------- */

const FileIcon = ({ kind }) => (
  <svg viewBox="0 0 24 30" className="h-[30px] w-6">
    <path d="M0 0h16l8 8v22H0z" fill="#f7f7f7" /><path d="M16 0v8h8z" fill="#c9c9c9" />
    {kind === 'jar' && <g><path d="M3 12h16v6q-8 8-16 0z" fill="#8d8d8d" /><ellipse cx="11" cy="12" rx="7" ry="3" fill="#4c4030" /></g>}
    {kind === 'zip' && <path d="M12 0v17" stroke="#333" strokeWidth="4" strokeDasharray="2 1" />}
    {kind === 'conll' && <g><path d="M6 12l8-2 2 12-8 2z" fill="#ddd" stroke="#bbb" /><path d="M20 8l-5 14" stroke="#444" strokeWidth="2" /></g>}
    {kind === 'txt' && <path d="M4 7h9M4 10h15M4 13h15M4 16h15M4 19h15M4 22h15M4 25h8" stroke="#b5b5b5" strokeWidth="1.200" />}
    {(kind === 'jar' || kind === 'zip') && (
      <text x="12" y="27" textAnchor="middle" fontSize="8" fontWeight="700" fontFamily="Liberation Sans, sans-serif" fill="#333">{kind.toUpperCase()}</text>
    )}
  </svg>
);
const downloads = [
  ['jar', 'inception-app-we....jar'], ['conll', '6683127-Hous....conll'], ['zip', 'webanno312043....zip'],
  ['txt', '6683127-House-....txt'], ['zip', 'some_project_20....zip'],
];
const Downloads = () => (
  <div className="flex h-[114px] items-center border-t-2 border-[#2a2b2c] bg-[#35363a] pl-2 text-[26px] text-white">
    {downloads.map(([kind, name], i) => (
      <div key={name} className={`flex h-full w-[466px] shrink-0 items-center ${i === 0 ? 'bg-[#46474b]' : ''}`}>
        <div className="flex flex-1 items-center pl-9">
          <FileIcon kind={kind} />
          <span className="w-[348px] pl-[33px]">{name}</span>
          <button type="button" aria-label={`Options for ${name}`}>
            <svg viewBox="0 0 20 12" className="h-3 w-5"><path d="M1 11l9-9 9 9" fill="none" stroke="#bdc1c6" strokeWidth="2.500" /></svg>
          </button>
        </div>
        <span className="h-[88px] w-0.5 bg-[#66676b]" />
      </div>
    ))}
    <div className="flex flex-1 items-center justify-end gap-[23px] pr-[22px] pb-1">
      <button type="button" className="h-16 w-[160px] rounded-lg border-2 border-[#3a3b3f] bg-[#292a2d] text-[24px] font-medium text-[#8ab0f5]">Show all</button>
      <button type="button" aria-label="Close downloads"><MdClose className="size-7 text-[#c4c7cb]" /></button>
    </div>
  </div>
);

export default function App() {
  return (
    <div className="flex min-h-screen flex-col bg-white font-[Inter,sans-serif]">
      <TabStrip />
      <AddressBar />
      <Bookmarks />
      <NavBar />
      <main className="flex flex-1 pt-[30px] pr-[30px] pb-[31px]">
        <Rail />
        <ActiveLearning />
        <div className="flex min-w-0 flex-1 gap-[31px] pl-[31px]">
          <Document />
          <Annotation />
        </div>
      </main>
      <footer className="flex h-[42px] items-center justify-center border-t-2 border-[#212529] pt-1 text-[28px] text-[#6c757d]">
        Technische Universität Darmstadt -- Computer Science Department -- INCEpTION -- 0.19.3 (2021-04-25 09:58:11, build 238b0e91)
      </footer>
      <Downloads />
    </div>
  );
}
